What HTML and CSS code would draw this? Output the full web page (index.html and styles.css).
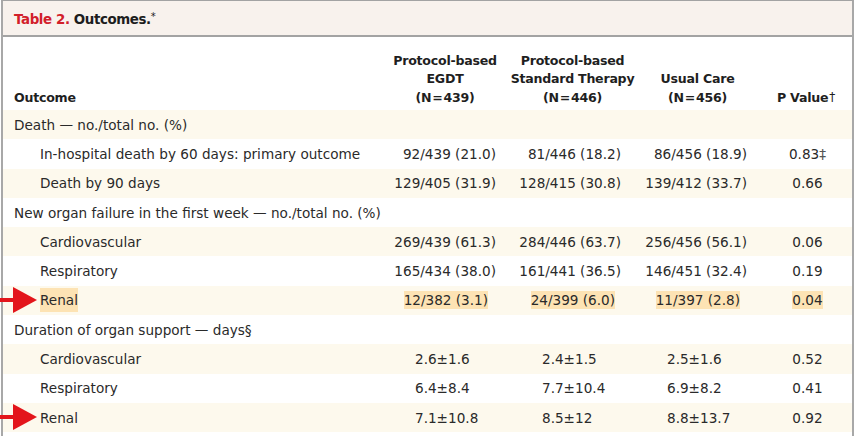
FILE: index.html
```html
<!DOCTYPE html>
<html>
<head>
<meta charset="utf-8">
<link rel="stylesheet" href="styles.css">
</head>
<body>
<div class="frame">
  <div class="title"><span class="tnum">Table 2.</span> Outcomes.<sup class="star">*</sup></div>
  <table class="tbl">
    <colgroup>
      <col class="c-label"><col class="c-1"><col class="c-2"><col class="c-3"><col class="c-4">
    </colgroup>
    <thead>
      <tr class="head">
        <th class="lab">Outcome</th>
        <th>Protocol-based<br>EGDT<br>(N&#8202;=&#8202;439)</th>
        <th>Protocol-based<br>Standard Therapy<br>(N&#8202;=&#8202;446)</th>
        <th>Usual Care<br>(N&#8202;=&#8202;456)</th>
        <th>P Value<sup class="dag">†</sup></th>
      </tr>
    </thead>
    <tbody>
      <tr class="odd"><td class="cat">Death — no./total no. (%)</td><td></td><td></td><td></td><td></td></tr>
      <tr><td class="sub">In-hospital death by 60 days: primary outcome</td><td class="n">92/439 (21.0)</td><td class="n">81/446 (18.2)</td><td class="n">86/456 (18.9)</td><td class="p">0.83<span class="dd">‡</span></td></tr>
      <tr class="odd"><td class="sub">Death by 90 days</td><td class="n">129/405 (31.9)</td><td class="n">128/415 (30.8)</td><td class="n">139/412 (33.7)</td><td class="p">0.66</td></tr>
      <tr><td class="cat">New organ failure in the first week — no./total no. (%)</td><td></td><td></td><td></td><td></td></tr>
      <tr class="odd"><td class="sub">Cardiovascular</td><td class="n">269/439 (61.3)</td><td class="n">284/446 (63.7)</td><td class="n">256/456 (56.1)</td><td class="p">0.06</td></tr>
      <tr><td class="sub">Respiratory</td><td class="n">165/434 (38.0)</td><td class="n">161/441 (36.5)</td><td class="n">146/451 (32.4)</td><td class="p">0.19</td></tr>
      <tr class="odd"><td class="sub arrowed"><svg class="arrow" width="40" height="28" viewBox="0 0 40 28"><rect x="0" y="12" width="16" height="4" fill="#e3151b"/><polygon points="13,1 37,14 13,27" fill="#e3151b"/></svg><span class="hl hl-lab">Renal</span></td><td class="n short"><span class="hl">12/382 (3.1)</span></td><td class="n short"><span class="hl">24/399 (6.0)</span></td><td class="n short"><span class="hl">11/397 (2.8)</span></td><td class="p"><span class="hl">0.04</span></td></tr>
      <tr><td class="cat">Duration of organ support — days§</td><td></td><td></td><td></td><td></td></tr>
      <tr class="odd pm"><td class="sub">Cardiovascular</td><td class="m1">2.6±1.6</td><td class="m2">2.4±1.5</td><td class="m3">2.5±1.6</td><td class="p">0.52</td></tr>
      <tr class="pm"><td class="sub">Respiratory</td><td class="m1">6.4±8.4</td><td class="m2">7.7±10.4</td><td class="m3">6.9±8.2</td><td class="p">0.41</td></tr>
      <tr class="odd pm"><td class="sub arrowed"><svg class="arrow" width="40" height="28" viewBox="0 0 40 28"><rect x="0" y="12" width="16" height="4" fill="#e3151b"/><polygon points="13,1 37,14 13,27" fill="#e3151b"/></svg>Renal</td><td class="m1">7.1±10.8</td><td class="m2">8.5±12</td><td class="m3">8.8±13.7</td><td class="p">0.92</td></tr>
    </tbody>
  </table>
</div>
</body>
</html>
```

FILE: styles.css
```css
html, body {
  margin: 0;
  padding: 0;
  background: #ffffff;
}
body {
  width: 856px;
  height: 436px;
  overflow: hidden;
  font-family: "DejaVu Sans", "Liberation Sans", sans-serif;
  color: #2a2a2a;
}
.frame {
  margin-left: 1px;
  width: 849px;
  height: 440px;
  border-top: 1px solid #a3a3a3;
  border-left: 2px solid #a8a8a8;
  border-right: 2px solid #a8a8a8;
}
.title {
  height: 36px;
  box-sizing: border-box;
  padding: 11px 0 0 11px;
  background: #f8f2ed;
  border-bottom: 2px solid #a3a3a3;
  font-weight: bold;
  font-size: 13.4px;
  letter-spacing: -0.4px;
  color: #1d1d1d;
}
.tnum { color: #d2202a; }
.star {
  font-size: 10px;
  font-weight: normal;
  vertical-align: 4px;
  line-height: 0;
}
.tbl {
  width: 849px;
  border-collapse: collapse;
  table-layout: fixed;
  font-size: 13.6px;
}
.c-label { width: 377px; }
.c-1 { width: 130px; }
.c-2 { width: 125px; }
.c-3 { width: 125px; }
.c-4 { width: 92px; }
.head { height: 73px; }
.head th {
  vertical-align: bottom;
  padding: 0 0 3px 0;
  font-weight: bold;
  font-size: 12.6px;
  letter-spacing: -0.25px;
  line-height: 18.5px;
  text-align: center;
  color: #1f1f1f;
  white-space: nowrap;
}
.head th.lab {
  text-align: left;
  padding-left: 11px;
}
.dag {
  font-size: 12px;
  font-weight: normal;
  vertical-align: 1px;
  line-height: 0;
  margin-left: 1px;
}
tbody tr { height: 29.3px; }
tbody tr.odd { background: #fdf9ed; }
tbody td {
  padding: 0;
  white-space: nowrap;
  vertical-align: middle;
}
td.cat { padding-left: 11px; }
td.sub { padding-left: 37px; }
td.n { text-align: right; }
td:nth-child(2).n { padding-right: 14px; }
td:nth-child(3).n { padding-right: 14px; }
td:nth-child(4).n { padding-right: 13px; }
td:nth-child(2).n.short { padding-right: 22px; }
td:nth-child(3).n.short { padding-right: 20px; }
td:nth-child(4).n.short { padding-right: 20px; }
td.p { text-align: center; padding-left: 3px; }
td.m1 { padding-left: 35px; }
td.m2 { padding-left: 32px; }
td.m3 { padding-left: 32px; }
.dd { color: #555; }
.hl {
  background: #fde3b4;
  padding: 1px 0;
}
.hl-lab {
  display: inline-block;
  padding: 3px 0;
  line-height: 18px;
}
td.arrowed { position: relative; }
.arrow {
  position: absolute;
  left: -3px;
  top: 0;
}
```
